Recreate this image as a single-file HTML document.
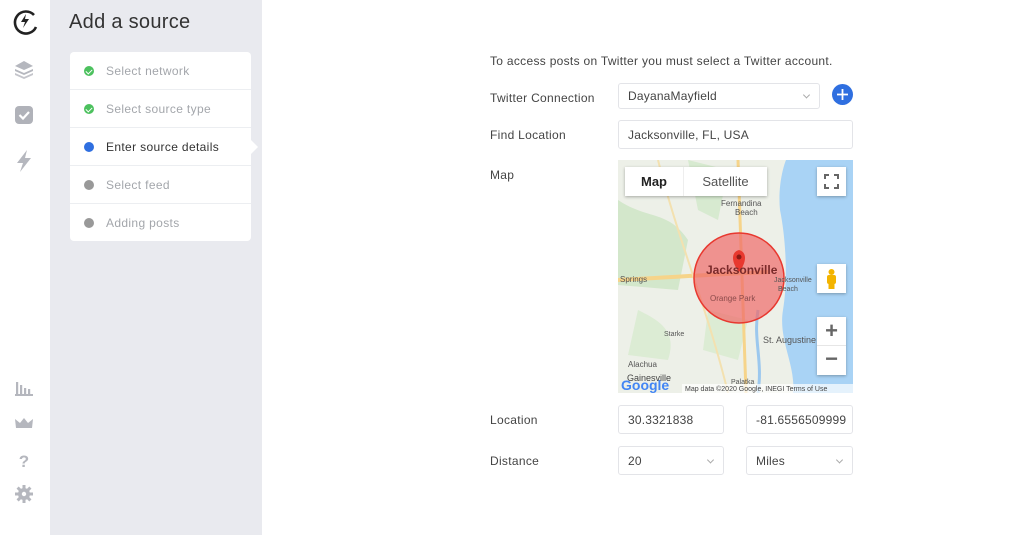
<!DOCTYPE html>
<html><head><meta charset="utf-8"><style>
*{box-sizing:border-box;margin:0;padding:0}
body{width:1024px;height:535px;overflow:hidden;font-family:"Liberation Sans",sans-serif;background:#fff;position:relative;color:#333}
.side{position:absolute;left:0;top:0;width:50px;height:535px;background:#fff}
.panel{position:absolute;left:50px;top:0;width:212px;height:535px;background:#e9eaef}
.panel h1{position:absolute;left:19px;top:11px;font-size:20px;font-weight:normal;color:#333;letter-spacing:.3px}
.steps{position:absolute;left:20px;top:52px;width:181px;height:189px;background:#fff;border-radius:4px}
.step{height:38px;border-bottom:1px solid #eceef1;display:flex;align-items:center;padding-left:14px;font-size:12px;letter-spacing:.35px;color:#a3a6ab}
.step:last-child{border:none}
.dot{width:10px;height:10px;border-radius:50%;background:#999;margin-right:12px;position:relative}
.ok{background:#4cc15e}
.ok:after{content:"";position:absolute;left:3px;top:2px;width:3px;height:5px;border:solid #fff;border-width:0 1.5px 1.5px 0;transform:rotate(45deg)}
.cur{color:#333}.cur .dot{background:#2f6fe0}
.arrow{position:absolute;left:201px;top:140px;width:0;height:0;border-top:7px solid transparent;border-bottom:7px solid transparent;border-left:7px solid #fff}
.lbl{position:absolute;left:490px;font-size:12px;letter-spacing:.3px;color:#444}
.inp{position:absolute;border:1px solid #e3e4e8;border-radius:3px;font-size:12px;letter-spacing:.2px;color:#444;padding-left:9px;display:flex;align-items:center;background:#fff;overflow:hidden;white-space:nowrap}
.chev{position:absolute;right:10px;top:50%;width:5px;height:5px;border:solid #aaa;border-width:0 1px 1px 0;transform:translateY(-70%) rotate(45deg)}
</style></head><body>
<div class="side">
<svg width="50" height="535" style="position:absolute;left:0;top:0">
<path d="M34 15 A11 11 0 1 0 36 27" fill="none" stroke="#222" stroke-width="2.6"/>
<path d="M26 14 L21 22 L25 22 L23 28 L29 19 L25 19 Z" fill="#222"/>
<g fill="#b5b7be"><path d="M24 61 L33 66 L24 70 L15 66Z"/><path d="M15 69 L24 73 L33 69 L33 71 L24 75 L15 71Z"/><path d="M15 73 L24 77 L33 73 L33 75 L24 79 L15 75Z" opacity=".8"/></g>
<rect x="15" y="106" width="18" height="18" rx="4" fill="#b0b2b9"/>
<path d="M19.5 115 L23 118.5 L29 112" fill="none" stroke="#fff" stroke-width="2.2"/>
<path d="M27 150 L17 163 L23 163 L20 172 L31 158 L25 158 Z" fill="#b5b7be"/>
<g fill="#b5b7be"><rect x="15" y="394" width="18" height="2"/><rect x="16" y="382" width="2.2" height="12"/><rect x="20" y="385" width="2.2" height="9"/><rect x="24" y="388" width="2.2" height="6"/><rect x="28" y="389" width="2.2" height="5"/>
<path d="M15 419 L20 423 L24 418 L28 423 L33 419 L32 428 L16 428Z"/>
<circle cx="24" cy="494" r="6"/></g>
<text x="24" y="467" font-size="17" font-weight="bold" fill="#b5b7be" text-anchor="middle" font-family="Liberation Sans">?</text>
<g stroke="#b5b7be" stroke-width="3"><path d="M24 485 V503 M15 494 H33 M17.6 487.6 L30.4 500.4 M30.4 487.6 L17.6 500.4"/></g>
<circle cx="24" cy="494" r="2.2" fill="#fff"/>
</svg>
</div>
<div class="panel"><h1>Add a source</h1>
<div class="steps">
<div class="step"><span class="dot ok"></span>Select network</div>
<div class="step"><span class="dot ok"></span>Select source type</div>
<div class="step cur"><span class="dot"></span>Enter source details</div>
<div class="step"><span class="dot"></span>Select feed</div>
<div class="step"><span class="dot"></span>Adding posts</div>
</div>
<div class="arrow"></div></div>

<div class="lbl" style="top:54px;color:#444">To access posts on Twitter you must select a Twitter account.</div>
<div class="lbl" style="top:91px">Twitter Connection</div>
<div class="inp" style="left:618px;top:83px;width:202px;height:26px">DayanaMayfield<span class="chev"></span></div>
<div style="position:absolute;left:832px;top:84px;width:21px;height:21px;border-radius:50%;background:#2f6fe0"><svg width="21" height="21"><path d="M10.5 5V16M5 10.5H16" stroke="#fff" stroke-width="1.8"/></svg></div>
<div class="lbl" style="top:128px">Find Location</div>
<div class="inp" style="left:618px;top:120px;width:235px;height:29px">Jacksonville, FL, USA</div>
<div class="lbl" style="top:168px">Map</div>

<div style="position:absolute;left:618px;top:160px;width:235px;height:233px;overflow:hidden;background:#eef0ea">
<svg width="235" height="233" style="position:absolute;left:0;top:0">
<path d="M0 0H235V233H0Z" fill="#edf0e8"/>
<path d="M0 40 C30 60 50 50 70 80 L60 130 L0 125 Z" fill="#d3e7cb"/>
<path d="M90 150 L130 160 L120 200 L85 190 Z" fill="#dcecd4"/>
<path d="M20 150 C40 160 60 170 50 200 L10 195 Z" fill="#dcecd4"/>
<path d="M70 0 L110 10 L100 60 L80 50 Z" fill="#d7ead0"/>
<path d="M168 0 H235 V233 H175 C178 205 160 180 165 150 C170 120 168 80 162 50 C160 30 164 10 168 0Z" fill="#a9d3f5"/>
<path d="M0 120 C40 118 80 115 150 112" stroke="#f6d48a" stroke-width="4" fill="none"/>
<path d="M120 0 L128 233" stroke="#f6d48a" stroke-width="3" fill="none"/>
<path d="M40 0 C60 80 90 150 110 233" stroke="#f3e1b0" stroke-width="2" fill="none"/>
<path d="M140 150 C135 180 145 200 140 233" stroke="#9cc8ee" stroke-width="3" fill="none"/>
<circle cx="121" cy="118" r="45" fill="#ef6a6a" fill-opacity=".7" stroke="#e8382f" stroke-width="1.5"/>
<path d="M121 112 C113 102 113 92 121 90 C129 92 129 102 121 112Z" fill="#e8382f"/><circle cx="121" cy="97" r="2.5" fill="#8b1a15"/>
<text x="88" y="114" font-size="12" font-weight="bold" fill="#7a2a2a" font-family="Liberation Sans">Jacksonville</text>
<text x="92" y="141" font-size="8" fill="#8a4a4a" font-family="Liberation Sans">Orange Park</text>
<text x="156" y="122" font-size="7" fill="#555" font-family="Liberation Sans">Jacksonville</text>
<text x="160" y="131" font-size="7" fill="#555" font-family="Liberation Sans">Beach</text>
<text x="103" y="46" font-size="8" fill="#555" font-family="Liberation Sans">Fernandina</text>
<text x="117" y="55" font-size="8" fill="#555" font-family="Liberation Sans">Beach</text>
<text x="97" y="30" font-size="7" fill="#555" font-family="Liberation Sans">Kingsland</text>
<text x="145" y="183" font-size="9" fill="#555" font-family="Liberation Sans">St. Augustine</text>
<text x="46" y="176" font-size="7" fill="#555" font-family="Liberation Sans">Starke</text>
<text x="2" y="122" font-size="8" fill="#555" font-family="Liberation Sans">Springs</text>
<text x="10" y="207" font-size="8" fill="#555" font-family="Liberation Sans">Alachua</text>
<text x="9" y="221" font-size="9" fill="#444" font-family="Liberation Sans">Gainesville</text>
<text x="113" y="224" font-size="7" fill="#555" font-family="Liberation Sans">Palatka</text>
<text x="3" y="230" font-size="14" font-weight="bold" fill="#4285f4" font-family="Liberation Sans">Google</text>
<rect x="64" y="224" width="171" height="9" fill="#fff" fill-opacity=".7"/>
<text x="67" y="231" font-size="7" fill="#444" font-family="Liberation Sans">Map data ©2020 Google, INEGI   Terms of Use</text>
</svg>
<div style="position:absolute;left:7px;top:7px;width:142px;height:29px;background:#fff;box-shadow:0 1px 3px rgba(0,0,0,.3);display:flex;font-size:13px">
<div style="width:59px;text-align:center;line-height:29px;font-weight:bold;color:#222;border-right:1px solid #eee">Map</div>
<div style="flex:1;text-align:center;line-height:29px;color:#555">Satellite</div></div>
<div style="position:absolute;left:199px;top:7px;width:29px;height:29px;background:#fff;box-shadow:0 1px 3px rgba(0,0,0,.3)">
<svg width="29" height="29"><path d="M8 12V8H12M17 8H21V12M21 17V21H17M12 21H8V17" fill="none" stroke="#666" stroke-width="2"/></svg></div>
<div style="position:absolute;left:199px;top:104px;width:29px;height:29px;background:#fff;box-shadow:0 1px 3px rgba(0,0,0,.3)">
<svg width="29" height="29"><circle cx="14.5" cy="8" r="3" fill="#f3b400"/><rect x="10" y="11" width="9" height="9" rx="2" fill="#f3b400"/><rect x="11.5" y="19" width="6" height="6" fill="#f3b400"/></svg></div>
<div style="position:absolute;left:199px;top:157px;width:29px;height:58px;background:#fff;box-shadow:0 1px 3px rgba(0,0,0,.3);color:#666;font-size:22px;font-weight:bold;text-align:center">
<div style="height:29px;line-height:28px;border-bottom:1px solid #e6e6e6">+</div><div style="line-height:26px">−</div></div>
</div>

<div class="lbl" style="top:413px">Location</div>
<div class="inp" style="left:618px;top:405px;width:106px;height:29px">30.3321838</div>
<div class="inp" style="left:746px;top:405px;width:107px;height:29px">-81.6556509999</div>
<div class="lbl" style="top:454px">Distance</div>
<div class="inp" style="left:618px;top:446px;width:106px;height:29px">20<span class="chev"></span></div>
<div class="inp" style="left:746px;top:446px;width:107px;height:29px">Miles<span class="chev"></span></div>
</body></html>
